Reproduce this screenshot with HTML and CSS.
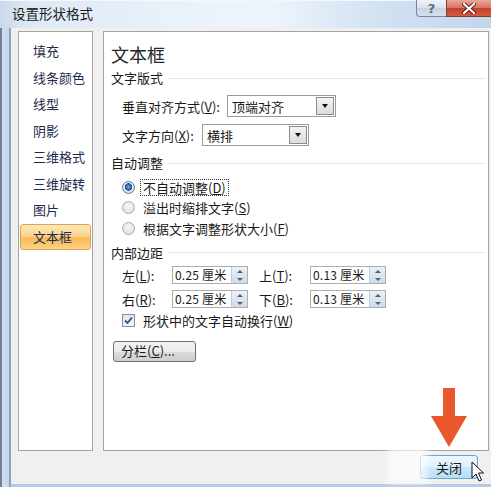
FILE: index.html
```html
<!DOCTYPE html>
<html lang="zh-CN">
  <head>
    <meta charset="UTF-8" />
    <title>设置形状格式</title>
    <link rel="stylesheet" href="styles.css">
  </head>
  <body>
    <div class="window">
      <div class="titlebar">
        <span class="title">设置形状格式</span>
        <div class="caption-btns">
          <div class="cap-btn help">?</div>
          <div class="cap-btn close">
            <svg width="14" height="11" viewBox="0 0 14 11">
              <path d="M2 1 L12 10 M12 1 L2 10" stroke="#5a1a10" stroke-width="4" stroke-linecap="round" />
              <path d="M2 1 L12 10 M12 1 L2 10" stroke="#fff" stroke-width="2.2" stroke-linecap="round" />
            </svg>
          </div>
        </div>
      </div>

      <div class="frame">
        <div class="client">
          <div class="panes">
            <ul class="nav">
              <li>填充</li>
              <li>线条颜色</li>
              <li>线型</li>
              <li>阴影</li>
              <li>三维格式</li>
              <li>三维旋转</li>
              <li>图片</li>
              <li class="active">文本框</li>
            </ul>

            <div class="pane">
              <div class="pane-title">文本框</div>

              <div class="group-label"><span>文字版式</span></div>
              <div class="field">
                <label class="lbl-valign">垂直对齐方式(<u>V</u>):</label>
                <div class="combo combo-valign">
                  <span class="combo-text">顶端对齐</span>
                  <span class="combo-btn"><i></i></span>
                </div>
              </div>
              <div class="field field-dir">
                <label class="lbl-dir">文字方向(<u>X</u>):</label>
                <div class="combo combo-dir">
                  <span class="combo-text">横排</span>
                  <span class="combo-btn"><i></i></span>
                </div>
              </div>

              <div class="group-label"><span>自动调整</span></div>
              <div class="radios">
                <div class="radio-row"><span class="radio checked"></span><span class="focus">不自动调整(<u>D</u>)</span></div>
                <div class="radio-row"><span class="radio"></span><span>溢出时缩排文字(<u>S</u>)</span></div>
                <div class="radio-row"><span class="radio"></span><span>根据文字调整形状大小(<u>F</u>)</span></div>
              </div>

              <div class="group-label"><span>内部边距</span></div>
              <div class="spin-row">
                <label class="spin-lbl">左(<u>L</u>):</label>
                <div class="spin"><span class="spin-text">0.25 厘米</span><span class="spin-btns"><i class="up"></i><i class="down"></i></span></div>
                <label class="spin-lbl second">上(<u>T</u>):</label>
                <div class="spin"><span class="spin-text">0.13 厘米</span><span class="spin-btns"><i class="up"></i><i class="down"></i></span></div>
              </div>
              <div class="spin-row">
                <label class="spin-lbl">右(<u>R</u>):</label>
                <div class="spin"><span class="spin-text">0.25 厘米</span><span class="spin-btns"><i class="up"></i><i class="down"></i></span></div>
                <label class="spin-lbl second">下(<u>B</u>):</label>
                <div class="spin"><span class="spin-text">0.13 厘米</span><span class="spin-btns"><i class="up"></i><i class="down"></i></span></div>
              </div>
              <div class="check-row">
                <span class="checkbox">
                  <svg width="9" height="9" viewBox="0 0 9 9"><path d="M1 4.5 L3.5 7 L8 1.5" fill="none" stroke="#274d8f" stroke-width="1.8" /></svg>
                </span>
                <span>形状中的文字自动换行(<u>W</u>)</span>
              </div>

              <button class="btn btn-columns">分栏(<u>C</u>)...</button>
            </div>
          </div>

          <div class="footer">
            <button class="btn btn-close">关闭</button>
          </div>
        </div>
      </div>

      <!-- callout pointing at the close button -->
      <div class="haze"></div>
      <svg class="callout" width="36" height="60" viewBox="0 0 36 60">
        <rect x="12" y="0" width="12" height="31" fill="#e8582c" />
        <polygon points="0,28 36,28 18,59" fill="#e8582c" />
      </svg>
      <svg class="pointer" width="13" height="21" viewBox="0 0 13 21">
        <path d="M1 1 L1 17 L5 13 L8 20 L10.5 19 L7.5 12 L12.5 12 Z" fill="#fff" stroke="#111" stroke-width="1" stroke-linejoin="round" />
      </svg>
    </div>
  </body>
</html>
```

FILE: styles.css
```css
body {
  margin: 0;
  font-family: "Noto Sans CJK SC", "Noto Sans", sans-serif;
  font-size: 13px;
  color: #1a1a1a;
  background: #c5d7ec;
}
u {
  text-decoration: underline;
}
.window {
  position: relative;
  width: 491px;
  height: 487px;
  overflow: hidden;
  display: flex;
  flex-direction: column;
}
.titlebar {
  height: 28px;
  display: flex;
  justify-content: space-between;
  align-items: flex-start;
  background: linear-gradient(to right, #c9d9ec 0, #dfe9f5 6%, #e9f1fa 35%, #eef4fb 55%, #d4e3f3 75%, #c2d6ec 100%);
  border-top: 1px solid #f4f8fc;
  box-sizing: border-box;
}
.title {
  margin: 3px 0 0 12px;
  font-size: 13.5px;
  line-height: 18px;
  color: #1b1b1b;
}
.caption-btns {
  display: flex;
  margin-top: -1px;
}
.cap-btn {
  height: 17px;
  display: flex;
  align-items: center;
  justify-content: center;
  box-sizing: border-box;
  border: 1px solid #76889e;
  border-top: none;
}
.cap-btn.help {
  width: 30px;
  border-radius: 0 0 0 4px;
  border-right: none;
  background: linear-gradient(#eef3f8, #d8e2ee 50%, #c6d3e2 51%, #d4dfeb);
  color: #5d6b7c;
  font-family: "DejaVu Sans", sans-serif;
  font-size: 13px;
  font-weight: bold;
}
.cap-btn.close {
  width: 45px;
  border-color: #8a3a2e;
  border-right: none;
  background: linear-gradient(#e9a99b, #d8715f 50%, #c5422c 51%, #d25a3f);
}

/* glass frame on the left and bottom */
.frame {
  flex: 1;
  display: flex;
  padding: 0 0 3px 11px;
  background:
    linear-gradient(to right, #6e8298 0, #6e8298 2px, #d0def0 2px, #c3d6eb 9px, #8ea3bc 9px, #8ea3bc 11px, transparent 11px),
    linear-gradient(#c6d8ed, #b5cbe4);
}
.client {
  flex: 1;
  background-color: #f0f0f0;
  padding: 3px 2px 0 7px;
  display: flex;
  flex-direction: column;
}
.panes {
  display: flex;
  gap: 10px;
  height: 420px;
}

/* category list */
.nav {
  width: 75px;
  margin: 0;
  padding: 6px 0 0;
  list-style: none;
  background: #fff;
  border: 1px solid #a3a3a3;
  box-sizing: border-box;
}
.nav li {
  height: 26.5px;
  line-height: 24px;
  padding-left: 12px;
  margin: 0 1px;
  box-sizing: border-box;
  border: 1px solid transparent;
  color: #1c2b4c;
}
.nav li.active {
  border-color: #e2a34e;
  border-radius: 3px;
  background: linear-gradient(#fde9b8, #fbd690 45%, #f8bb55 55%, #fbd288);
}

/* settings pane */
.pane {
  flex: 1;
  background: #fff;
  border: 1px solid #a3a3a3;
  box-sizing: border-box;
  padding: 10px 3px 0 7px;
}
.pane-title {
  font-size: 18px;
  line-height: 24px;
  color: #262626;
}
.group-label {
  display: flex;
  align-items: center;
  gap: 5px;
  line-height: 18px;
  margin-top: 3px;
}
.group-label::after {
  content: "";
  flex: 1;
  height: 1px;
  background: #dfe5ea;
}
.field {
  display: flex;
  align-items: center;
  margin: 8px 0 0 11px;
}
.field-dir {
  margin-top: 7px;
}
.lbl-valign {
  width: 105px;
}
.lbl-dir {
  width: 80px;
}
.combo {
  height: 22px;
  display: flex;
  align-items: center;
  border: 1px solid #9a9a9a;
  box-sizing: border-box;
  background: #fff;
}
.combo-valign {
  width: 109px;
}
.combo-dir {
  width: 107px;
}
.combo-text {
  flex: 1;
  padding-left: 4px;
}
.combo-btn {
  width: 18px;
  height: 18px;
  margin-right: 1px;
  box-sizing: border-box;
  border: 1px solid #8c8c8c;
  background: linear-gradient(#f4f4f4, #dcdcdc);
  display: flex;
  align-items: center;
  justify-content: center;
}
.combo-btn i {
  width: 0;
  height: 0;
  border-left: 3.5px solid transparent;
  border-right: 3.5px solid transparent;
  border-top: 4px solid #111;
}
.field + .group-label {
  margin-top: 8px;
}
.radios {
  margin-left: 11px;
}
.radio-row {
  display: flex;
  align-items: center;
  gap: 8px;
  height: 20.5px;
}
.radio-row:first-child {
  margin-top: 5px;
}
.radio {
  width: 13px;
  height: 13px;
  border-radius: 50%;
  box-sizing: border-box;
  border: 1px solid #a4abb3;
  background: radial-gradient(circle at 50% 40%, #f7f7f7, #dadcdf);
}
.radio.checked {
  border-color: #5b7ba1;
  background: radial-gradient(circle at 50% 45%, #7ab0e3 0, #2c68b0 2.5px, #1d4e8e 3.5px, #e8eef5 4px, #d3dbe4 6px);
}
.focus {
  outline: 1px dotted #333;
  padding: 0 2px;
  margin-left: -2px;
  line-height: 15px;
}
.radios + .group-label {
  margin-top: 5px;
}
.spin-row {
  display: flex;
  align-items: center;
  margin: 4px 0 0 11px;
}
.spin-row + .spin-row {
  margin-top: 5px;
}
.spin-lbl {
  width: 50px;
}
.spin-lbl.second {
  width: 51px;
  margin-left: 11px;
}
.spin {
  width: 76px;
  height: 18px;
  display: flex;
  box-sizing: border-box;
  border: 1px solid #abadb3;
  background: #fff;
}
.spin-text {
  flex: 1;
  white-space: nowrap;
  padding-left: 2px;
  font-size: 12px;
  line-height: 16px;
  letter-spacing: 0.2px;
}
.spin-btns {
  width: 15px;
  display: flex;
  flex-direction: column;
  border-left: 1px solid #c3ccd6;
  background: linear-gradient(#eaf1f8, #cddbea);
}
.spin-btns i {
  flex: 1;
  display: flex;
  align-items: center;
  justify-content: center;
}
.spin-btns i::before {
  content: "";
  border-left: 3px solid transparent;
  border-right: 3px solid transparent;
}
.spin-btns i.up::before {
  border-bottom: 3px solid #55606c;
}
.spin-btns i.down::before {
  border-top: 3px solid #55606c;
}
.check-row {
  display: flex;
  align-items: center;
  gap: 8px;
  height: 18px;
  margin: 3px 0 0 11px;
}
.checkbox {
  width: 13px;
  height: 13px;
  box-sizing: border-box;
  border: 1px solid #8e8f8f;
  background: linear-gradient(#dfe6ee, #f2f5f8);
  display: flex;
  align-items: center;
  justify-content: center;
}
.btn {
  font-family: inherit;
  font-size: 13px;
  color: #1a1a1a;
  border: 1px solid #707070;
  border-radius: 3px;
  background: linear-gradient(#f2f2f2, #ebebeb 50%, #dddddd 51%, #cfcfcf);
  padding: 0;
}
.btn-columns {
  display: block;
  width: 83px;
  height: 21px;
  margin: 11px 0 0 2px;
  text-align: left;
  padding-left: 7px;
  line-height: 18px;
}
.footer {
  flex: 1;
  display: flex;
  justify-content: flex-end;
  align-items: flex-start;
  padding: 4px 11px 0 0;
}
.btn-close {
  width: 58px;
  height: 24px;
  border-color: #6fa4cf;
  background: linear-gradient(#eef7fd, #dff1fc 50%, #c8e8fb 51%, #b5dff6);
}

/* overlays */
.haze {
  position: absolute;
  left: 388px;
  top: 438px;
  width: 40px;
  height: 46px;
  background: rgba(255, 255, 255, 0.65);
  border-radius: 14px 14px 0 0;
  filter: blur(3px);
}
.callout {
  position: absolute;
  left: 431px;
  top: 388px;
}
.pointer {
  position: absolute;
  left: 471px;
  top: 461px;
}
```
